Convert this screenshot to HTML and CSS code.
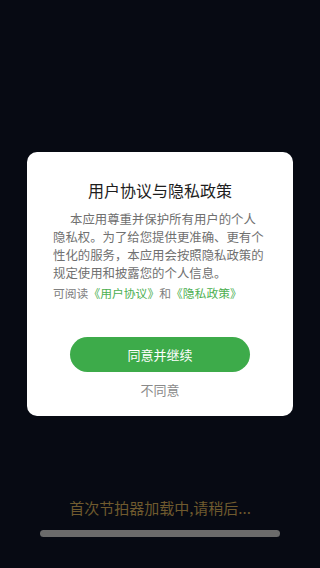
FILE: index.html
```html
<!DOCTYPE html>
<html lang="zh-CN">
<head>
<meta charset="utf-8">
<meta name="viewport" content="width=device-width, initial-scale=1">
<title>用户协议与隐私政策</title>
<link rel="stylesheet" href="styles.css">
</head>
<body>
<main class="screen">
  <div class="loading">
    <p class="loading-text">首次节拍器加载中,请稍后...</p>
    <div class="loading-bar"></div>
  </div>
</main>
<div class="overlay">
  <section class="dialog">
    <h1 class="dialog-title">用户协议与隐私政策</h1>
    <p class="dialog-body">本应用尊重并保护所有用户的个人隐私权。为了给您提供更准确、更有个性化的服务，本应用会按照隐私政策的规定使用和披露您的个人信息。</p>
    <p class="dialog-links">可阅读<a class="link">《用户协议》</a>和<a class="link">《隐私政策》</a></p>
    <button class="btn-agree">同意并继续</button>
    <button class="btn-disagree">不同意</button>
  </section>
</div>
</body>
</html>
```
FILE: styles.css
```css
* { box-sizing: border-box; }
html, body {
  margin: 0;
  padding: 0;
  height: 100%;
}
body {
  background: #070a13;
  font-family: "Noto Sans CJK SC", "Noto Sans", sans-serif;
}
.screen {
  height: 568px;
  display: flex;
  flex-direction: column;
  justify-content: flex-end;
  padding: 0 40px 31px;
}
.loading {
  display: flex;
  flex-direction: column;
  align-items: center;
  gap: 12px;
}
.loading-text {
  margin: 0;
  font-size: 15px;
  line-height: 21px;
  color: #6f5a2e;
}
.loading-bar {
  width: 240px;
  height: 7px;
  border-radius: 4px;
  background: #6b6b6b;
}
.overlay {
  position: fixed;
  inset: 0;
  display: flex;
  align-items: center;
  justify-content: center;
}
.dialog {
  width: 266px;
  background: #fff;
  border-radius: 10px;
  padding: 27px 26px 17px;
  display: flex;
  flex-direction: column;
}
.dialog-title {
  margin: 0;
  font-size: 16px;
  line-height: 22px;
  font-weight: 400;
  color: #1e1e1e;
  text-align: center;
}
.dialog-body {
  margin: 9px 0 0;
  font-size: 12.4px;
  line-height: 18px;
  color: #707070;
  text-indent: 17px;
}
.dialog-links {
  margin: 2px 0 0;
  font-size: 11.8px;
  line-height: 18px;
  color: #808080;
}
.link {
  color: #4caf50;
}
.btn-agree {
  align-self: center;
  margin-top: 35px;
  width: 180px;
  height: 35px;
  border: 0;
  border-radius: 18px;
  background: #3dab4a;
  color: #fff;
  font-family: inherit;
  font-size: 13px;
  padding: 0;
}
.btn-disagree {
  align-self: center;
  margin-top: 9px;
  border: 0;
  background: none;
  padding: 0;
  font-family: inherit;
  font-size: 13px;
  line-height: 18px;
  color: #8a8a8a;
}
```
